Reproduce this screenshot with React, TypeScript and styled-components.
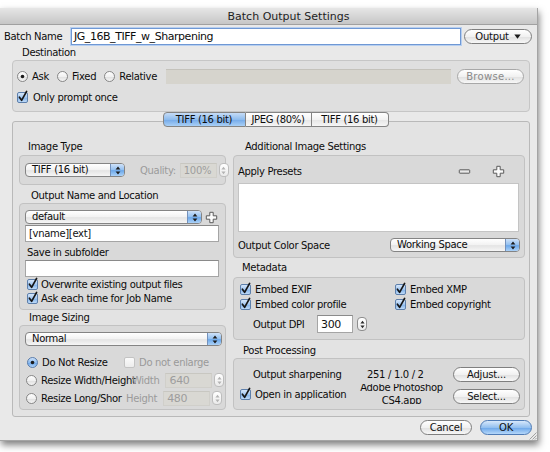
import React from "react";
import styled, { createGlobalStyle } from "styled-components";

const GlobalStyle = createGlobalStyle`
  html, body { margin: 0; padding: 0; background: #ffffff; }
  body {
    font-family: "DejaVu Sans", "Liberation Sans", sans-serif;
    font-size: 10px;
    letter-spacing: -0.32px;
    color: #0c0c0c;
  }
  #root { width: 550px; height: 452px; overflow: hidden; }
`;

function useGid(prefix: string) {
  const raw = React.useId();
  return prefix + raw.replace(/[^a-zA-Z0-9]/g, "");
}

/* ---------- layout ---------- */

const Stage = styled.div`
  width: 550px;
  height: 452px;
  padding-top: 8px;
  box-sizing: border-box;
`;

const Window = styled.div`
  position: relative;
  width: 538px;
  height: 433px;
  box-sizing: border-box;
  background: #e9e9e9;
  border-right: 1px solid #a4a4a4;
  border-bottom: 1px solid #a4a4a4;
  box-shadow: 1px 4px 7px rgba(0, 0, 0, 0.5);
  display: flex;
  flex-direction: column;
`;

const TitleBar = styled.div`
  height: 17px;
  flex: none;
  box-sizing: border-box;
  display: flex;
  align-items: center;
  justify-content: center;
  padding-left: 40px;
  background: linear-gradient(#e6e6e6, #c6c6c6);
  border-bottom: 1px solid #a0a0a0;
  font-size: 11px;
  letter-spacing: 0;
  color: #1e1e1e;
`;

const BatchRow = styled.div`
  height: 18px;
  margin-top: 2px;
  display: flex;
  align-items: center;
  padding-left: 4px;
  flex: none;
`;

const BatchLabel = styled.span`
  width: 67px;
  white-space: nowrap;
`;

const BatchInput = styled.div`
  width: 390px;
  height: 17px;
  box-sizing: border-box;
  background: #fff;
  border: 1px solid #6f98d4;
  box-shadow: 0 0 0 1px #b7cff0;
  font-size: 11px;
  letter-spacing: -0.45px;
  line-height: 15px;
  padding-left: 2px;
  white-space: nowrap;
`;

const GroupLabel = styled.div<{ $h: number; $pt?: number; $pl: number }>`
  height: ${(p) => p.$h}px;
  box-sizing: border-box;
  padding-top: ${(p) => p.$pt ?? 0}px;
  padding-left: ${(p) => p.$pl}px;
  line-height: 14px;
  white-space: nowrap;
  flex: none;
`;

const DestBox = styled.div`
  height: 52px;
  margin: 0 7px 0 12px;
  box-sizing: border-box;
  flex: none;
  background: #dfdfdf;
  border: 1px solid #c6c6c6;
  border-radius: 4px;
  padding: 7px 5px 0 4px;
  display: flex;
  flex-direction: column;
  gap: 5px;
`;

const Row = styled.div<{ $h?: number; $mt?: number; $pl?: number }>`
  height: ${(p) => p.$h ?? 16}px;
  margin-top: ${(p) => p.$mt ?? 0}px;
  padding-left: ${(p) => p.$pl ?? 0}px;
  display: flex;
  align-items: center;
  flex: none;
  white-space: nowrap;
`;

const Choice = styled.span<{ $w?: number; $gap?: number; $mr?: number; $dim?: boolean }>`
  display: inline-flex;
  align-items: center;
  gap: ${(p) => p.$gap ?? 4}px;
  width: ${(p) => (p.$w ? `${p.$w}px` : "auto")};
  margin-right: ${(p) => p.$mr ?? 0}px;
  color: ${(p) => (p.$dim ? "#9a9a9a" : "inherit")};
  white-space: nowrap;
  flex: none;
`;

const PathField = styled.div`
  width: 285px;
  height: 14px;
  margin-left: auto;
  background: #d6d4cd;
  border-top: 1px solid #c4c2bb;
`;

const PillButton = styled.div<{ $w: number; $dim?: boolean; $primary?: boolean; $mt?: number; $ml?: number }>`
  width: ${(p) => p.$w}px;
  height: 15px;
  margin-top: ${(p) => p.$mt ?? 0}px;
  margin-left: ${(p) => p.$ml ?? 0}px;
  box-sizing: border-box;
  flex: none;
  display: flex;
  align-items: center;
  justify-content: center;
  gap: 5px;
  border-radius: 8px;
  border: 1px solid ${(p) => (p.$primary ? "#4f7bb5" : p.$dim ? "#a8a8a8" : "#7f7f7f")};
  background: ${(p) =>
    p.$primary
      ? "linear-gradient(#d7e8fb, #93c0f0 50%, #6fa9ea 55%, #b5d7fa)"
      : "linear-gradient(#ffffff, #f1f1f1 50%, #e2e2e2 55%, #f7f7f7)"};
  color: ${(p) => (p.$dim ? "#8a8a8a" : "#111")};
  letter-spacing: ${(p) => (p.$dim ? "0.3px" : "-0.2px")};
  white-space: nowrap;
`;

const TabsRow = styled.div`
  height: 15px;
  flex: none;
  display: flex;
  justify-content: center;
  padding-left: 14px;
  margin-bottom: -6px;
  position: relative;
  z-index: 1;
`;

const Segment = styled.div<{ $w: number; $on?: boolean; $first?: boolean; $last?: boolean }>`
  width: ${(p) => p.$w}px;
  height: 15px;
  box-sizing: border-box;
  display: flex;
  align-items: center;
  justify-content: center;
  border: 1px solid #848484;
  border-left-width: ${(p) => (p.$first ? 1 : 0)}px;
  border-radius: ${(p) => (p.$first ? "4px 0 0 4px" : p.$last ? "0 4px 4px 0" : "0")};
  background: ${(p) =>
    p.$on
      ? "linear-gradient(#c6dcf6, #8ebcee 50%, #77acea 55%, #a9d0f6)"
      : "linear-gradient(#ffffff, #f3f3f3 50%, #e6e6e6 55%, #f6f6f6)"};
  white-space: nowrap;
`;

const TabPanel = styled.div`
  height: 296px;
  margin: 0 7px 0 12px;
  box-sizing: border-box;
  flex: none;
  background: #e3e3e3;
  border: 1px solid #b9b9b9;
  border-radius: 3px;
  padding: 18px 5px 6px 6px;
  display: grid;
  grid-template-columns: 207px 292px;
  column-gap: 7px;
`;

const Column = styled.div`
  display: flex;
  flex-direction: column;
`;

const GroupBox = styled.div<{ $h: number; $pt?: number; $px?: number }>`
  height: ${(p) => p.$h}px;
  box-sizing: border-box;
  flex: none;
  background: #d9d9d9;
  border: 1px solid #c2c2c2;
  border-radius: 4px;
  padding: ${(p) => p.$pt ?? 0}px ${(p) => p.$px ?? 5}px 0 ${(p) => p.$px ?? 5}px;
  display: flex;
  flex-direction: column;
`;

const CenterBox = styled(GroupBox)`
  flex-direction: row;
  align-items: center;
`;

const PopupBox = styled.div<{ $w: number; $ml?: number }>`
  width: ${(p) => p.$w}px;
  height: 14px;
  margin-left: ${(p) => p.$ml ?? 0}px;
  box-sizing: border-box;
  flex: none;
  display: flex;
  align-items: stretch;
  border: 1px solid #848484;
  border-radius: 4px;
  overflow: hidden;
  background: linear-gradient(#ffffff, #f2f2f2 50%, #e4e4e4 55%, #f6f6f6);
`;

const PopupText = styled.span`
  flex: 1;
  padding-left: 6px;
  line-height: 12px;
  white-space: nowrap;
`;

const PopupCap = styled.span`
  width: 13px;
  flex: none;
  display: flex;
  align-items: center;
  justify-content: center;
  border-left: 1px solid #7391bc;
  background: linear-gradient(#cfe2f9, #91bff0 50%, #6ca8ea 55%, #acd2f8);
`;

const DimText = styled.span<{ $ml?: number }>`
  color: #9b9b9b;
  margin-left: ${(p) => p.$ml ?? 0}px;
  white-space: nowrap;
  flex: none;
`;

const Field = styled.div<{ $w?: number; $h?: number; $dim?: boolean; $ml?: number; $big?: boolean; $grow?: boolean }>`
  width: ${(p) => (p.$grow ? "auto" : `${p.$w ?? 40}px`)};
  flex: ${(p) => (p.$grow ? "1 1 auto" : "none")};
  height: ${(p) => p.$h ?? 17}px;
  margin-left: ${(p) => p.$ml ?? 0}px;
  margin-right: ${(p) => (p.$grow ? 1 : 0)}px;
  box-sizing: border-box;
  display: flex;
  align-items: center;
  padding-left: 3px;
  background: ${(p) => (p.$dim ? "#d9d8d3" : "#ffffff")};
  border: 1px solid ${(p) => (p.$dim ? "#d0cfca" : "#a5a5a5")};
  border-top-color: ${(p) => (p.$dim ? "#c8c7c1" : "#8a8a8a")};
  color: ${(p) => (p.$dim ? "#9d9d9d" : "#111")};
  font-size: ${(p) => (p.$big ? 11 : 10)}px;
  white-space: nowrap;
`;

const StepperBox = styled.div<{ $ml?: number; $dim?: boolean }>`
  width: 10px;
  height: 14px;
  margin-left: ${(p) => p.$ml ?? 2}px;
  box-sizing: border-box;
  flex: none;
  display: flex;
  align-items: center;
  justify-content: center;
  border: 1px solid ${(p) => (p.$dim ? "#bdbdbd" : "#8e8e8e")};
  border-radius: 4px;
  background: linear-gradient(#ffffff, #eaeaea);
`;

const PresetList = styled.div`
  height: 47px;
  margin: 5px 1px 0 0;
  flex: none;
  background: #ffffff;
  border: 1px solid #c4c4c4;
`;

const IconBtn = styled.span<{ $ml?: number }>`
  margin-left: ${(p) => (p.$ml === undefined ? "auto" : `${p.$ml}px`)};
  display: inline-flex;
  flex: none;
`;

const MetaGrid = styled.div`
  display: grid;
  grid-template-columns: 155px 1fr;
  grid-auto-rows: 15px;
  align-items: center;
  padding-left: 6px;
`;

const AppName = styled.div`
  width: 95px;
  height: 20px;
  overflow: hidden;
  text-align: center;
  line-height: 13px;
  flex: none;
`;

const AppLines = styled.div`
  margin-top: -3px;
`;

const Footer = styled.div`
  height: 24px;
  flex: none;
  display: flex;
  justify-content: flex-end;
  gap: 8px;
  padding: 3px 5px 0 0;
  box-sizing: border-box;
`;

const Grip = styled.svg`
  position: absolute;
  right: 0;
  bottom: 0;
`;

const IconSvg = styled.svg`
  flex: none;
  overflow: visible;
  display: block;
`;

/* ---------- drawings ---------- */

const Check: React.FC<{ on?: boolean; dim?: boolean }> = ({ on = true, dim }) => {
  const g = useGid("cb");
  return (
    <IconSvg width="11" height="11" viewBox="0 0 11 11">
      <defs>
        <linearGradient id={g} x1="0" y1="0" x2="0" y2="1">
          {dim ? (
            <>
              <stop offset="0" stopColor="#fbfbfb" />
              <stop offset="1" stopColor="#ececec" />
            </>
          ) : (
            <>
              <stop offset="0" stopColor="#dceafb" />
              <stop offset="0.5" stopColor="#a2c7f1" />
              <stop offset="0.55" stopColor="#86b6ec" />
              <stop offset="1" stopColor="#c6dff9" />
            </>
          )}
        </linearGradient>
      </defs>
      <rect x="0.5" y="0.5" width="10" height="10" rx="1.5" fill={`url(#${g})`} stroke={dim ? "#c3c3c3" : "#5d7fab"} />
      {on && (
        <path
          d="M2.4 5.2 L4.6 8.3 L9.6 -0.6"
          fill="none"
          stroke="#161616"
          strokeWidth="1.7"
          strokeLinecap="round"
          strokeLinejoin="round"
        />
      )}
    </IconSvg>
  );
};

const Radio: React.FC<{ on?: boolean; blue?: boolean }> = ({ on, blue }) => {
  const g = useGid("rd");
  return (
    <IconSvg width="11" height="11" viewBox="0 0 11 11">
      <defs>
        <linearGradient id={g} x1="0" y1="0" x2="0" y2="1">
          {blue ? (
            <>
              <stop offset="0" stopColor="#d3e5fb" />
              <stop offset="0.5" stopColor="#8dbcf0" />
              <stop offset="0.55" stopColor="#6ea8ea" />
              <stop offset="1" stopColor="#b9d9fa" />
            </>
          ) : (
            <>
              <stop offset="0" stopColor="#ffffff" />
              <stop offset="0.5" stopColor="#f1f1f1" />
              <stop offset="0.55" stopColor="#e1e1e1" />
              <stop offset="1" stopColor="#f7f7f7" />
            </>
          )}
        </linearGradient>
      </defs>
      <circle cx="5.5" cy="5.5" r="5" fill={`url(#${g})`} stroke={blue ? "#4f73a3" : "#7a7a7a"} strokeWidth="0.9" />
      {on && <circle cx="5.5" cy="5.5" r="1.8" fill="#1a1a1a" />}
    </IconSvg>
  );
};

const UpDown: React.FC<{ small?: boolean; color?: string }> = ({ small, color = "#1c1c1c" }) =>
  small ? (
    <IconSvg width="5" height="9" viewBox="0 0 5 9">
      <path d="M2.5 0.8 L4.6 3.4 H0.4 Z M2.5 8.2 L4.6 5.6 H0.4 Z" fill={color} />
    </IconSvg>
  ) : (
    <IconSvg width="6" height="9" viewBox="0 0 6 9">
      <path d="M3 0.6 L5.4 3.6 H0.6 Z M3 8.4 L5.4 5.4 H0.6 Z" fill={color} />
    </IconSvg>
  );

const DownTri: React.FC = () => (
  <IconSvg width="7" height="5" viewBox="0 0 7 5">
    <path d="M0.3 0.5 H6.7 L3.5 4.7 Z" fill="#1c1c1c" />
  </IconSvg>
);

const Plus: React.FC = () => (
  <IconSvg width="13" height="13" viewBox="0 0 13 13">
    <path
      d="M4.8 1.3 H8.2 V4.8 H11.7 V8.2 H8.2 V11.7 H4.8 V8.2 H1.3 V4.8 H4.8 Z"
      fill="#fbfbfb"
      stroke="#5a5a5a"
      strokeWidth="1"
      strokeLinejoin="round"
    />
  </IconSvg>
);

const Minus: React.FC = () => (
  <IconSvg width="13" height="13" viewBox="0 0 13 13">
    <rect x="1.3" y="4.8" width="10.4" height="3.4" rx="0.6" fill="#e9e9e9" stroke="#5a5a5a" strokeWidth="1" />
  </IconSvg>
);

const Popup: React.FC<{ w: number; label: string; ml?: number }> = ({ w, label, ml }) => (
  <PopupBox $w={w} $ml={ml}>
    <PopupText>{label}</PopupText>
    <PopupCap>
      <UpDown />
    </PopupCap>
  </PopupBox>
);

const Stepper: React.FC<{ ml?: number; dim?: boolean }> = ({ ml, dim }) => (
  <StepperBox $ml={ml} $dim={dim}>
    <UpDown small color={dim ? "#b3b3b3" : "#2a2a2a"} />
  </StepperBox>
);

/* ---------- page ---------- */

export default function App() {
  return (
    <>
      <GlobalStyle />
      <Stage>
        <Window>
          <TitleBar>Batch Output Settings</TitleBar>

          <BatchRow>
            <BatchLabel>Batch Name</BatchLabel>
            <BatchInput>JG_16B_TIFF_w_Sharpening</BatchInput>
            <PillButton $w={68} $ml={3}>
              Output <DownTri />
            </PillButton>
          </BatchRow>

          <GroupLabel $h={15} $pt={1} $pl={22}>
            Destination
          </GroupLabel>
          <DestBox>
            <Row>
              <Choice $mr={8}>
                <Radio on />
                Ask
              </Choice>
              <Choice $mr={8}>
                <Radio />
                Fixed
              </Choice>
              <Choice>
                <Radio />
                Relative
              </Choice>
              <PathField />
              <PillButton $w={67} $dim $ml={6}>
                Browse...
              </PillButton>
            </Row>
            <Row>
              <Choice $gap={5}>
                <Check />
                Only prompt once
              </Choice>
            </Row>
          </DestBox>

          <TabsRow>
            <Segment $w={83} $on $first>
              TIFF (16 bit)
            </Segment>
            <Segment $w={66}>JPEG (80%)</Segment>
            <Segment $w={77} $last>
              TIFF (16 bit)
            </Segment>
          </TabsRow>

          <TabPanel>
            <Column>
              <GroupLabel $h={15} $pl={9}>
                Image Type
              </GroupLabel>
              <CenterBox $h={30}>
                <Popup w={100} label="TIFF (16 bit)" />
                <DimText $ml={15}>Quality:</DimText>
                <Field $w={37} $h={15} $dim $ml={4}>
                  100%
                </Field>
                <Stepper dim />
              </CenterBox>

              <GroupLabel $h={18} $pt={4} $pl={12}>
                Output Name and Location
              </GroupLabel>
              <GroupBox $h={107} $pt={6}>
                <Row $h={14}>
                  <Popup w={177} label="default" />
                  <IconBtn $ml={3}>
                    <Plus />
                  </IconBtn>
                </Row>
                <Row $h={17} $mt={1}>
                  <Field $grow>[vname][ext]</Field>
                </Row>
                <Row $h={14} $mt={3} $pl={2}>
                  Save in subfolder
                </Row>
                <Row $h={17} $mt={1}>
                  <Field $grow />
                </Row>
                <Row $h={14} $pl={2}>
                  <Choice $gap={3}>
                    <Check />
                    Overwrite existing output files
                  </Choice>
                </Row>
                <Row $h={14} $pl={2}>
                  <Choice $gap={3}>
                    <Check />
                    Ask each time for Job Name
                  </Choice>
                </Row>
              </GroupBox>

              <GroupLabel $h={15} $pt={1} $pl={10}>
                Image Sizing
              </GroupLabel>
              <GroupBox $h={85} $pt={6}>
                <Row $h={14}>
                  <Popup w={197} label="Normal" />
                </Row>
                <Row $h={18} $mt={7} $pl={2}>
                  <Choice $w={97}>
                    <Radio on blue />
                    Do Not Resize
                  </Choice>
                  <Choice $gap={4} $dim>
                    <Check on={false} dim />
                    Do not enlarge
                  </Choice>
                </Row>
                <Row $h={18} $pl={1}>
                  <Choice $w={100}>
                    <Radio />
                    Resize Width/Height
                  </Choice>
                  <DimText $ml={6}>Width</DimText>
                  <Field $w={47} $h={15} $dim $ml={6} $big>
                    640
                  </Field>
                  <Stepper dim />
                </Row>
                <Row $h={18} $pl={1}>
                  <Choice $w={100}>
                    <Radio />
                    Resize Long/Shor
                  </Choice>
                  <DimText $ml={0}>Height</DimText>
                  <Field $w={47} $h={15} $dim $ml={6} $big>
                    480
                  </Field>
                  <Stepper dim />
                </Row>
              </GroupBox>
            </Column>

            <Column>
              <GroupLabel $h={15} $pl={12}>
                Additional Image Settings
              </GroupLabel>
              <GroupBox $h={103} $pt={8} $px={4}>
                <Row $h={14}>
                  Apply Presets
                  <IconBtn>
                    <Minus />
                  </IconBtn>
                  <IconBtn $ml={21}>
                    <Plus />
                  </IconBtn>
                  <IconBtn $ml={15} />
                </Row>
                <PresetList />
                <Row $h={14} $mt={6}>
                  Output Color Space
                  <IconBtn>
                    <Popup w={130} label="Working Space" />
                  </IconBtn>
                </Row>
              </GroupBox>

              <GroupLabel $h={19} $pt={3} $pl={9}>
                Metadata
              </GroupLabel>
              <GroupBox $h={63} $pt={4} $px={0}>
                <MetaGrid>
                  <Choice $gap={4}>
                    <Check />
                    Embed EXIF
                  </Choice>
                  <Choice $gap={4}>
                    <Check />
                    Embed XMP
                  </Choice>
                  <Choice $gap={4}>
                    <Check />
                    Embed color profile
                  </Choice>
                  <Choice $gap={4}>
                    <Check />
                    Embed copyright
                  </Choice>
                </MetaGrid>
                <Row $h={18} $mt={3} $pl={19}>
                  <Choice $w={64}>Output DPI</Choice>
                  <Field $w={36} $h={18} $big>
                    300
                  </Field>
                  <Stepper ml={4} />
                </Row>
              </GroupBox>

              <GroupLabel $h={18} $pt={4} $pl={10}>
                Post Processing
              </GroupLabel>
              <GroupBox $h={52} $pt={7} $px={4}>
                <Row $h={16} $pl={15}>
                  <Choice $w={114}>Output sharpening</Choice>
                  <span>251 / 1.0 / 2</span>
                  <IconBtn>
                    <PillButton $w={67}>Adjust...</PillButton>
                  </IconBtn>
                </Row>
                <Row $h={20} $mt={2} $pl={2}>
                  <Choice $w={114} $gap={4}>
                    <Check />
                    Open in application
                  </Choice>
                  <AppName>
                    <AppLines>
                      Adobe Photoshop
                      <br />
                      CS4.app
                    </AppLines>
                  </AppName>
                  <IconBtn>
                    <PillButton $w={67} $mt={5}>
                      Select...
                    </PillButton>
                  </IconBtn>
                </Row>
              </GroupBox>
            </Column>
          </TabPanel>

          <Footer>
            <PillButton $w={52}>Cancel</PillButton>
            <PillButton $w={52} $primary>
              OK
            </PillButton>
          </Footer>

          <Grip width="10" height="10" viewBox="0 0 10 10">
            <path d="M9.5 2.5 L2.5 9.5 M9.5 5.5 L5.5 9.5 M9.5 8 L8 9.5" stroke="#9a9a9a" strokeWidth="0.9" />
          </Grip>
        </Window>
      </Stage>
    </>
  );
}
